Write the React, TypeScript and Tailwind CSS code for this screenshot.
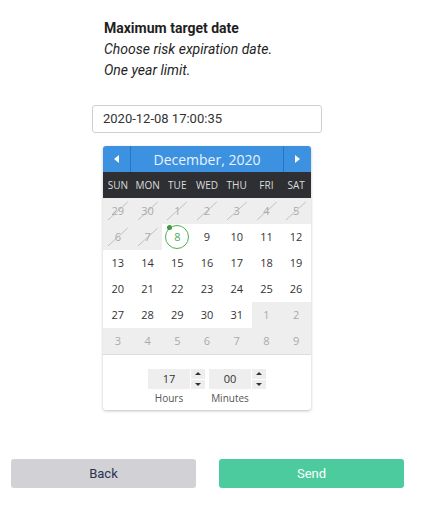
import React from 'react'

const WEEKDAYS = ['SUN', 'MON', 'TUE', 'WED', 'THU', 'FRI', 'SAT']

type Day = { n: number; kind: 'past' | 'cur' | 'next'; sel?: boolean }

const buildDays = (): Day[] => {
  const days: Day[] = []
  days.push({ n: 29, kind: 'past' }, { n: 30, kind: 'past' })
  for (let d = 1; d <= 31; d++) {
    days.push({ n: d, kind: d < 8 ? 'past' : 'cur', sel: d === 8 })
  }
  for (let d = 1; d <= 9; d++) days.push({ n: d, kind: 'next' })
  return days
}

function Spinner() {
  return (
    <div className="flex flex-col w-[15px] h-[20px] bg-[#eeeeee] border-l border-white">
      <div className="flex-1 flex items-center justify-center border-b border-white">
        <div className="w-0 h-0 border-l-[3px] border-r-[3px] border-b-[3px] border-l-transparent border-r-transparent border-b-[#333]" />
      </div>
      <div className="flex-1 flex items-center justify-center">
        <div className="w-0 h-0 border-l-[3px] border-r-[3px] border-t-[3px] border-l-transparent border-r-transparent border-t-[#333]" />
      </div>
    </div>
  )
}

function TimeField({ value, label }: { value: string; label: string }) {
  return (
    <div className="flex flex-col items-center">
      <div className="flex">
        <div className="w-[42px] h-[20px] bg-[#eeeeee] flex items-center justify-center text-[11px] text-[#333]">
          {value}
        </div>
        <Spinner />
      </div>
      <div className="mt-[3px] text-[10px] text-[#555] leading-[13px] pr-[15px]">{label}</div>
    </div>
  )
}

export default function App() {
  const days = buildDays()

  return (
    <div className="w-[428px] h-[510px] bg-white font-['Roboto',sans-serif]">
      {/* Title */}
      <div className="pt-[18px] pl-[104px] text-[14px] leading-[21px] text-[#1f1f1f]">
        <div className="font-bold">Maximum target date</div>
        <div className="italic">Choose risk expiration date.</div>
        <div className="italic">One year limit.</div>
      </div>

      {/* Input */}
      <div className="mt-[24px] ml-[92px] w-[230px] h-[28px] border border-[#cfcfcf] rounded-[3px] flex items-center pl-[10px] text-[13px] text-[#333]">
        2020-12-08 17:00:35
      </div>

      {/* Calendar */}
      <div className="mt-[13px] ml-[103px] w-[208px] rounded-[3px] overflow-hidden shadow-[0_1px_3px_rgba(0,0,0,0.25)] font-['Open_Sans',sans-serif] bg-white">
        <div className="h-[26px] bg-[#3c92e0] flex items-stretch">
          <div className="w-[28px] flex items-center justify-center border-r border-[#2a74c0]">
            <div className="w-0 h-0 border-t-[4px] border-b-[4px] border-r-[5px] border-t-transparent border-b-transparent border-r-white" />
          </div>
          <div className="flex-1 flex items-center justify-center text-[14px] text-[#eaf3fc]">December, 2020</div>
          <div className="w-[28px] flex items-center justify-center border-l border-[#2a74c0]">
            <div className="w-0 h-0 border-t-[4px] border-b-[4px] border-l-[5px] border-t-transparent border-b-transparent border-l-white" />
          </div>
        </div>
        <div className="h-[26px] bg-[#2d2f33] grid grid-cols-7">
          {WEEKDAYS.map((w) => (
            <div key={w} className="flex items-center justify-center text-[10px] text-[#dcdcdc]">{w}</div>
          ))}
        </div>
        <div className="grid grid-cols-7">
          {days.map((d, i) => (
            <div
              key={i}
              className={`relative h-[26px] flex items-center justify-center text-[11px] ${
                d.kind === 'cur' ? 'bg-white text-[#333]' : 'bg-[#eeeeee] text-[#aaaaaa]'
              }`}
            >
              {d.sel ? (
                <div className="relative w-[24px] h-[24px] rounded-full border border-[#4caf50] flex items-center justify-center text-[#4caf50]">
                  {d.n}
                  <div className="absolute -top-[1px] left-[1px] w-[5px] h-[5px] rounded-full bg-[#3a9d3e]" />
                </div>
              ) : (
                <span>{d.n}</span>
              )}
              {d.kind === 'past' && (
                <svg className="absolute inset-0" width="100%" height="100%" viewBox="0 0 30 26" preserveAspectRatio="none">
                  <line x1="5" y1="22" x2="25" y2="4" stroke="#b5b5b5" strokeWidth="0.8" />
                </svg>
              )}
            </div>
          ))}
        </div>
        <div className="border-t border-[#dddddd] h-[56px] flex justify-center gap-[4px] pt-[14px]">
          <TimeField value="17" label="Hours" />
          <TimeField value="00" label="Minutes" />
        </div>
      </div>

      {/* Buttons */}
      <div className="mt-[49px] pl-[11px] pr-[24px] flex gap-[23px]">
        <button className="flex-1 h-[29px] rounded-[3px] bg-[#d1d1d6] text-[#2a3350] text-[13px]">Back</button>
        <button className="flex-1 h-[29px] rounded-[3px] bg-[#4ccb9f] text-white text-[13px]">Send</button>
      </div>
    </div>
  )
}
